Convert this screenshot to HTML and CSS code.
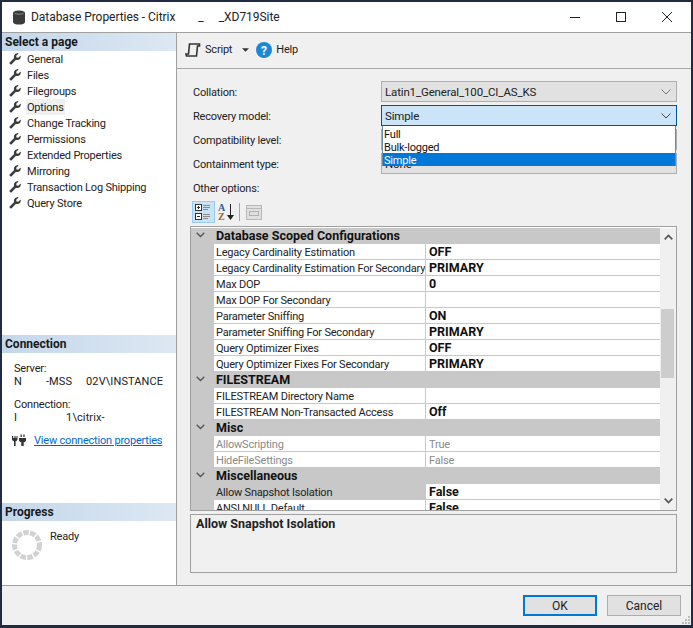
FILE: index.html
```html
<!DOCTYPE html>
<html lang="en">
<head>
<meta charset="utf-8">
<title>Database Properties</title>
<link rel="stylesheet" href="styles.css">
</head>
<body>
<svg class="defs" aria-hidden="true">
  <symbol id="wrench" viewBox="0 0 12 12"><path d="M11.6 2.4 9.2 4.8 7.6 4.4 7.2 2.8 9.6.4C7.6-.2 5.4 1 5 3c-.2.8 0 1.500.2 2L.7 9.500c-.9.9 1 2.700 1.900 1.800L7 6.800c.6.200 1.300.3 2 .2 2-.4 3.200-2.600 2.600-4.600Z" fill="#3a3a3a"/></symbol>
</svg>
<div class="window">
  <header class="titlebar">
    <svg class="dbicon" width="14" height="15" viewBox="0 0 14 15"><path d="M1 3c0-3.400 12-3.400 12 0v9c0 3.400-12 3.400-12 0Z" fill="#3b3b3b"/><path d="M2.500 3.300c1.500 1.200 7.500 1.200 9 0" fill="none" stroke="#8a8a8a" stroke-width="1"/></svg>
    <span class="title">Database Properties - Citrix</span>
    <span class="title title-a">_</span>
    <span class="title title-b">_XD719Site</span>
    <div class="winctl">
      <svg width="12" height="12" viewBox="0 0 12 12"><path d="M1 6.500h10" stroke="#222" fill="none"/></svg>
      <svg width="12" height="12" viewBox="0 0 12 12"><rect x="1.500" y="1.500" width="9" height="9" stroke="#222" fill="none"/></svg>
      <svg width="12" height="12" viewBox="0 0 12 12"><path d="M1 1l10 10M11 1 1 11" stroke="#222" fill="none"/></svg>
    </div>
  </header>
  <div class="main">
    <aside class="side">
      <section class="side-top">
        <h2 class="sechead">Select a page</h2>
        <ul class="pages">
          <li class="page"><svg class="wr"><use href="#wrench"/></svg><span>General</span></li>
          <li class="page"><svg class="wr"><use href="#wrench"/></svg><span>Files</span></li>
          <li class="page"><svg class="wr"><use href="#wrench"/></svg><span>Filegroups</span></li>
          <li class="page"><svg class="wr"><use href="#wrench"/></svg><span class="active">Options</span></li>
          <li class="page"><svg class="wr"><use href="#wrench"/></svg><span>Change Tracking</span></li>
          <li class="page"><svg class="wr"><use href="#wrench"/></svg><span>Permissions</span></li>
          <li class="page"><svg class="wr"><use href="#wrench"/></svg><span>Extended Properties</span></li>
          <li class="page"><svg class="wr"><use href="#wrench"/></svg><span>Mirroring</span></li>
          <li class="page"><svg class="wr"><use href="#wrench"/></svg><span>Transaction Log Shipping</span></li>
          <li class="page"><svg class="wr"><use href="#wrench"/></svg><span>Query Store</span></li>
        </ul>
      </section>
      <section class="side-conn">
        <h2 class="sechead">Connection</h2>
        <div class="conn">
          <div class="conn-l">Server:</div>
          <div class="conn-v">N<span class="g1"></span>-MSS<span class="g2"></span>02V\INSTANCE</div>
          <div class="conn-l conn-l2">Connection:</div>
          <div class="conn-v">I<span class="g3"></span>1\citrix-</div>
          <div class="connlink">
            <svg width="16" height="14" viewBox="0 0 16 14"><path d="M1 3v3c0 1.500 1 2 2 2.300V13h1.600V8.300C5.600 8 6.500 7.500 6.500 6V3H5.500v2H4.600V3H3.400v2H2.200V3ZM8 5h7v2c0 1.500-1 2-2.300 2.300V13h-2.400V9.300C9 9 8 8.500 8 7ZM9.500 1.500h1.300V4H9.500ZM12.300 1.500h1.300V4h-1.300Z" fill="#333"/></svg>
            <a class="link">View connection properties</a>
          </div>
        </div>
      </section>
      <section class="side-prog">
        <h2 class="sechead">Progress</h2>
        <div class="prog">
          <svg width="32" height="32" viewBox="0 0 32 32"><circle cx="16" cy="16" r="12.500" fill="none" stroke="#d2d2d2" stroke-width="5" stroke-dasharray="5.500 1.350"/></svg>
          <span class="ready">Ready</span>
        </div>
      </section>
    </aside>
    <div class="content">
      <div class="toolbar">
        <svg width="18" height="16" viewBox="0 0 18 16"><path d="M5.500 2H15.500V4H13.500L12.500 14H2.500L2 12H4.500Z" fill="none" stroke="#333" stroke-width="1.600"/></svg>
        <span class="tb-text tb-script">Script</span>
        <svg class="caret" width="7" height="4" viewBox="0 0 8 4"><path d="M0 0h8L4 4Z" fill="#333"/></svg>
        <svg class="help" width="16" height="16" viewBox="0 0 16 16"><circle cx="8" cy="8" r="8" fill="#1c88d4"/><text x="8" y="12.500" text-anchor="middle" class="helpq">?</text></svg>
        <span class="tb-text">Help</span>
      </div>
      <div class="body">
        <div class="form">
          <label class="flabel">Collation:</label>
          <div class="combo"><span>Latin1_General_100_CI_AS_KS</span><svg class="chev" width="10" height="6" viewBox="0 0 10 6"><path d="M.5.500 5 5 9.500.500" fill="none" stroke="#777"/></svg></div>
          <label class="flabel">Recovery model:</label>
          <div class="combo combo-open"><span>Simple</span><svg class="chev" width="10" height="6" viewBox="0 0 10 6"><path d="M.5.500 5 5 9.500.500" fill="none" stroke="#444"/></svg></div>
          <label class="flabel">Compatibility level:</label>
          <div class="combo"></div>
          <label class="flabel">Containment type:</label>
          <div class="combo"><span>None</span></div>
          <ul class="droplist">
            <li class="dropitem">Full</li>
            <li class="dropitem">Bulk-logged</li>
            <li class="dropitem dropsel">Simple</li>
          </ul>
        </div>
        <div class="other">Other options:</div>
        <div class="gridbar">
          <span class="gbtn gbtn-on"><svg width="22" height="22" viewBox="0 0 22 22"><g fill="none" stroke="#333"><rect x="3.500" y="3.500" width="6" height="6" fill="#fff"/><rect x="3.500" y="12.500" width="6" height="6" fill="#fff"/><path d="M5 6.500h3M6.500 5v3M5 15.500h3"/></g><path d="M11 4.500h7M11 6.500h7M11 8.500h5M11 13.500h7M11 15.500h7M11 17.500h5" stroke="#8a8a8a"/></svg></span>
          <span class="gbtn-az"><span class="az a">A</span><span class="az z">Z</span></span>
          <svg class="arrow" width="7" height="16" viewBox="0 0 7 16"><path d="M3.500 0v13" stroke="#222"/><path d="M0 11h7l-3.500 5Z" fill="#222"/></svg>
          <span class="gsep"></span>
          <svg width="16" height="16" viewBox="0 0 16 16"><rect x=".5" y="1.500" width="15" height="14" fill="#e0e0e0" stroke="#b8b8b8"/><path d="M.5 4.500h15" stroke="#b8b8b8"/><rect x="3.500" y="7.500" width="9" height="4" fill="none" stroke="#b0b0b0"/></svg>
        </div>
        <div class="grid">
          <div class="grid-rows">
            <div class="cat"><svg class="catchev" width="9" height="6" viewBox="0 0 9 6"><path d="M.7.700 4.500 4.500 8.300.700" fill="none" stroke="#555" stroke-width="1.300"/></svg><span>Database Scoped Configurations</span></div>
            <div class="row"><span class="n">Legacy Cardinality Estimation</span><span class="v">OFF</span></div>
            <div class="row"><span class="n">Legacy Cardinality Estimation For Secondary</span><span class="v">PRIMARY</span></div>
            <div class="row"><span class="n">Max DOP</span><span class="v">0</span></div>
            <div class="row"><span class="n">Max DOP For Secondary</span><span class="v"></span></div>
            <div class="row"><span class="n">Parameter Sniffing</span><span class="v">ON</span></div>
            <div class="row"><span class="n">Parameter Sniffing For Secondary</span><span class="v">PRIMARY</span></div>
            <div class="row"><span class="n">Query Optimizer Fixes</span><span class="v">OFF</span></div>
            <div class="row"><span class="n">Query Optimizer Fixes For Secondary</span><span class="v">PRIMARY</span></div>
            <div class="cat"><svg class="catchev" width="9" height="6" viewBox="0 0 9 6"><path d="M.7.700 4.500 4.500 8.300.700" fill="none" stroke="#555" stroke-width="1.300"/></svg><span>FILESTREAM</span></div>
            <div class="row"><span class="n">FILESTREAM Directory Name</span><span class="v"></span></div>
            <div class="row"><span class="n">FILESTREAM Non-Transacted Access</span><span class="v">Off</span></div>
            <div class="cat"><svg class="catchev" width="9" height="6" viewBox="0 0 9 6"><path d="M.7.700 4.500 4.500 8.300.700" fill="none" stroke="#555" stroke-width="1.300"/></svg><span>Misc</span></div>
            <div class="row row-off"><span class="n">AllowScripting</span><span class="v">True</span></div>
            <div class="row row-off"><span class="n">HideFileSettings</span><span class="v">False</span></div>
            <div class="cat"><svg class="catchev" width="9" height="6" viewBox="0 0 9 6"><path d="M.7.700 4.500 4.500 8.300.700" fill="none" stroke="#555" stroke-width="1.300"/></svg><span>Miscellaneous</span></div>
            <div class="row row-sel"><span class="n">Allow Snapshot Isolation</span><span class="v">False</span></div>
            <div class="row"><span class="n">ANSI NULL Default</span><span class="v">False</span></div>
          </div>
          <div class="scroll">
            <svg width="9" height="6" viewBox="0 0 9 6"><path d="M.7 5.300 4.500 1.500 8.300 5.300" fill="none" stroke="#555" stroke-width="1.700"/></svg>
            <div class="thumb"></div>
            <svg width="9" height="6" viewBox="0 0 9 6"><path d="M.7.700 4.500 4.500 8.300.700" fill="none" stroke="#555" stroke-width="1.700"/></svg>
          </div>
        </div>
        <div class="desc">Allow Snapshot Isolation</div>
      </div>
    </div>
  </div>
  <footer class="footer">
    <button class="btn btn-ok">OK</button>
    <button class="btn">Cancel</button>
    <svg class="grip" width="9" height="9" viewBox="0 0 9 9"><path d="M6 0h2v2H6ZM3 3h2v2H3ZM6 3h2v2H6ZM0 6h2v2H0ZM3 6h2v2H3ZM6 6h2v2H6Z" fill="#bdbdbd"/></svg>
  </footer>
</div>
</body>
</html>
```

FILE: styles.css
```css
* { box-sizing: border-box; }
html, body { margin: 0; padding: 0; }
body {
  width: 693px;
  height: 628px;
  background: #1f2c44;
  padding: 2px 2px 3px 2px;
  font-family: Roboto, "Open Sans", sans-serif;
  font-size: 11px;
  letter-spacing: -0.2px;
  color: #222;
  overflow: hidden;
}
.defs { display: none; }
.window {
  width: 689px;
  height: 623px;
  background: #f0f0f0;
  display: flex;
  flex-direction: column;
}
.titlebar {
  height: 31px;
  flex: none;
  background: #fff;
  border-bottom: 1px solid #a0a0a0;
  display: flex;
  align-items: center;
  padding-left: 10px;
}
.dbicon { margin-right: 5px; }
.title { font-size: 12px; letter-spacing: -0.05px; color: #222; white-space: nowrap; }
.title-a { margin-left: 23px; }
.title-b { margin-left: 15px; }
.winctl { margin-left: auto; display: flex; gap: 34px; padding-right: 18px; }
.main { flex: 1; display: flex; min-height: 0; }
.side {
  width: 175px;
  flex: none;
  background: #fff;
  border-right: 1px solid #a0a0a0;
  display: flex;
  flex-direction: column;
}
.sechead {
  margin: 0;
  height: 18px;
  line-height: 18px;
  padding-left: 3px;
  font-size: 12px;
  font-weight: 700;
  letter-spacing: 0;
  color: #1a1a1a;
  background: linear-gradient(90deg, #c4d7ea, #dde8f3);
}
.side-top { height: 302px; flex: none; }
.side-conn { height: 168px; flex: none; }
.side-prog { flex: 1; }
.pages { list-style: none; margin: 0; padding: 0; }
.page {
  height: 16px;
  display: flex;
  align-items: center;
  padding-left: 7px;
  white-space: nowrap;
}
.wr { width: 12px; height: 12px; flex: none; margin-right: 5px; }
.page span { padding: 1px 1px 0; height: 16px; line-height: 16px; }
.page .active { background: #f0f0f0; }
.conn { padding: 9px 0 0 12px; line-height: 13px; }
.conn-l2 { margin-top: 10px; }
.conn-v { white-space: nowrap; letter-spacing: 0.1px; }
.g1 { display: inline-block; width: 24px; }
.g2 { display: inline-block; width: 14px; }
.g3 { display: inline-block; width: 49px; }
.connlink { display: flex; align-items: center; margin: 8px 0 0 -3px; gap: 7px; height: 16px; letter-spacing: -0.2px; }
.link { color: #0066cc; text-decoration: underline; white-space: nowrap; }
.prog { display: flex; padding: 8px 0 0 9px; }
.ready { margin: 0 0 0 7px; line-height: 16px; }
.content { flex: 1; display: flex; flex-direction: column; min-width: 0; }
.toolbar {
  height: 36px;
  flex: none;
  border-bottom: 1px solid #a8a8a8;
  display: flex;
  align-items: center;
  padding: 0 0 2px 7px;
}
.tb-text { margin-left: 4px; }
.tb-script { margin-left: 3px; }
.caret { margin-left: 10px; margin-right: 7px; }
.helpq { font: 700 12px Roboto, sans-serif; fill: #fff; }
.body { flex: 1; padding-left: 13px; position: relative; min-height: 0; }
.form {
  position: relative;
  display: grid;
  grid-template-columns: 188px 296px;
  grid-auto-rows: 21px;
  row-gap: 3px;
  padding: 12px 0 0 3px;
  align-items: center;
}
.flabel { white-space: nowrap; padding-top: 2px; }
.combo {
  height: 21px;
  border: 1px solid #adadad;
  background: #e1e1e1;
  display: flex;
  align-items: center;
  justify-content: space-between;
  padding: 0 5px 0 3px;
  font-size: 11.500px;
  letter-spacing: -0.15px;
  white-space: nowrap;
}
.combo-open { background: #cce4f7; border-color: #005499; }
.droplist {
  position: absolute;
  left: 192px;
  top: 57px;
  width: 294px;
  margin: 0;
  padding: 1px 0 0;
  list-style: none;
  background: #fff;
  border-left: 1px solid #6f8aa5;
  border-right: 1px solid #6f8aa5;
  border-bottom: 1px solid #6f8aa5;
  height: 40px;
}
.dropitem { height: 13px; line-height: 15px; padding-left: 1px; color: #111; }
.dropsel { background: #0078d7; color: #fff; }
.other { margin: 7px 0 0 3px; line-height: 16px; }
.gridbar { display: flex; align-items: center; height: 24px; margin: 3px 0 2px 2px; }
.gbtn { width: 23px; height: 22px; display: block; }
.gbtn-on { background: #c9e2f6; border: 1px solid #9ccbf0; }
.gbtn-on svg { display: block; margin: -1px; }
.gbtn-az { display: flex; flex-direction: column; margin-left: 3px; font: 700 10px/9px "Liberation Serif", serif; letter-spacing: 0; }
.az.a { color: #2e5c8f; }
.az.z { color: #a0622a; }
.arrow { margin-left: 2px; }
.gsep { width: 1px; height: 18px; background: #a8a8a8; margin: 0 6px 0 5px; }
.grid {
  width: 487px;
  height: 285px;
  border: 1px solid #a0a0a0;
  padding-top: 1px;
  display: flex;
  overflow: hidden;
  background: #fff;
}
.grid-rows { width: 469px; flex: none; overflow: hidden; }
.cat {
  height: 16px;
  background: #c8c8c8;
  display: flex;
  align-items: center;
  padding-bottom: 2px;
  font-weight: 700;
  font-size: 12.500px;
  letter-spacing: 0;
  color: #111;
  white-space: nowrap;
}
.catchev { margin: 0 11px 0 5px; flex: none; }
.row {
  height: 16px;
  display: flex;
  border-bottom: 1px solid #c8c8c8;
  border-left: 23px solid #c8c8c8;
  line-height: 18px;
  white-space: nowrap;
}
.n { width: 212px; flex: none; padding-left: 2px; border-right: 1px solid #c8c8c8; overflow: hidden; }
.v { padding-left: 3px; font-weight: 700; font-size: 12.500px; letter-spacing: 0; color: #111; line-height: 16px; }
.row-off .n, .row-off .v { color: #8a8a8a; font-weight: 400; font-size: 11px; letter-spacing: -0.2px; }
.row-off .v { line-height: 18px; }
.row-sel .n { background: #c8c8c8; }
.scroll {
  flex: 1;
  background: #f0f0f0;
  position: relative;
  display: flex;
  flex-direction: column;
  align-items: center;
  justify-content: space-between;
  padding: 6px 0;
}
.thumb {
  position: absolute;
  left: 1px;
  right: 2px;
  top: 81px;
  height: 69px;
  background: #cdcdcd;
}
.desc {
  width: 487px;
  height: 59px;
  margin-top: 3px;
  border: 1px solid #a0a0a0;
  padding: 2px 5px;
  font-weight: 700;
  font-size: 12.500px;
  letter-spacing: 0;
  line-height: 14px;
  color: #222;
}
.footer {
  height: 40px;
  flex: none;
  position: relative;
  display: flex;
  justify-content: flex-end;
  gap: 10px;
  padding: 9px 10px 0 0;
  border-top: 1px solid #a0a0a0;
}
.btn {
  width: 74px;
  height: 21px;
  border: 1px solid #adadad;
  background: #e1e1e1;
  font: 400 12px Roboto, sans-serif;
  color: #222;
  padding: 0;
}
.btn-ok { border: 2px solid #0078d7; }
.grip { position: absolute; right: 0; bottom: 0; }
```
